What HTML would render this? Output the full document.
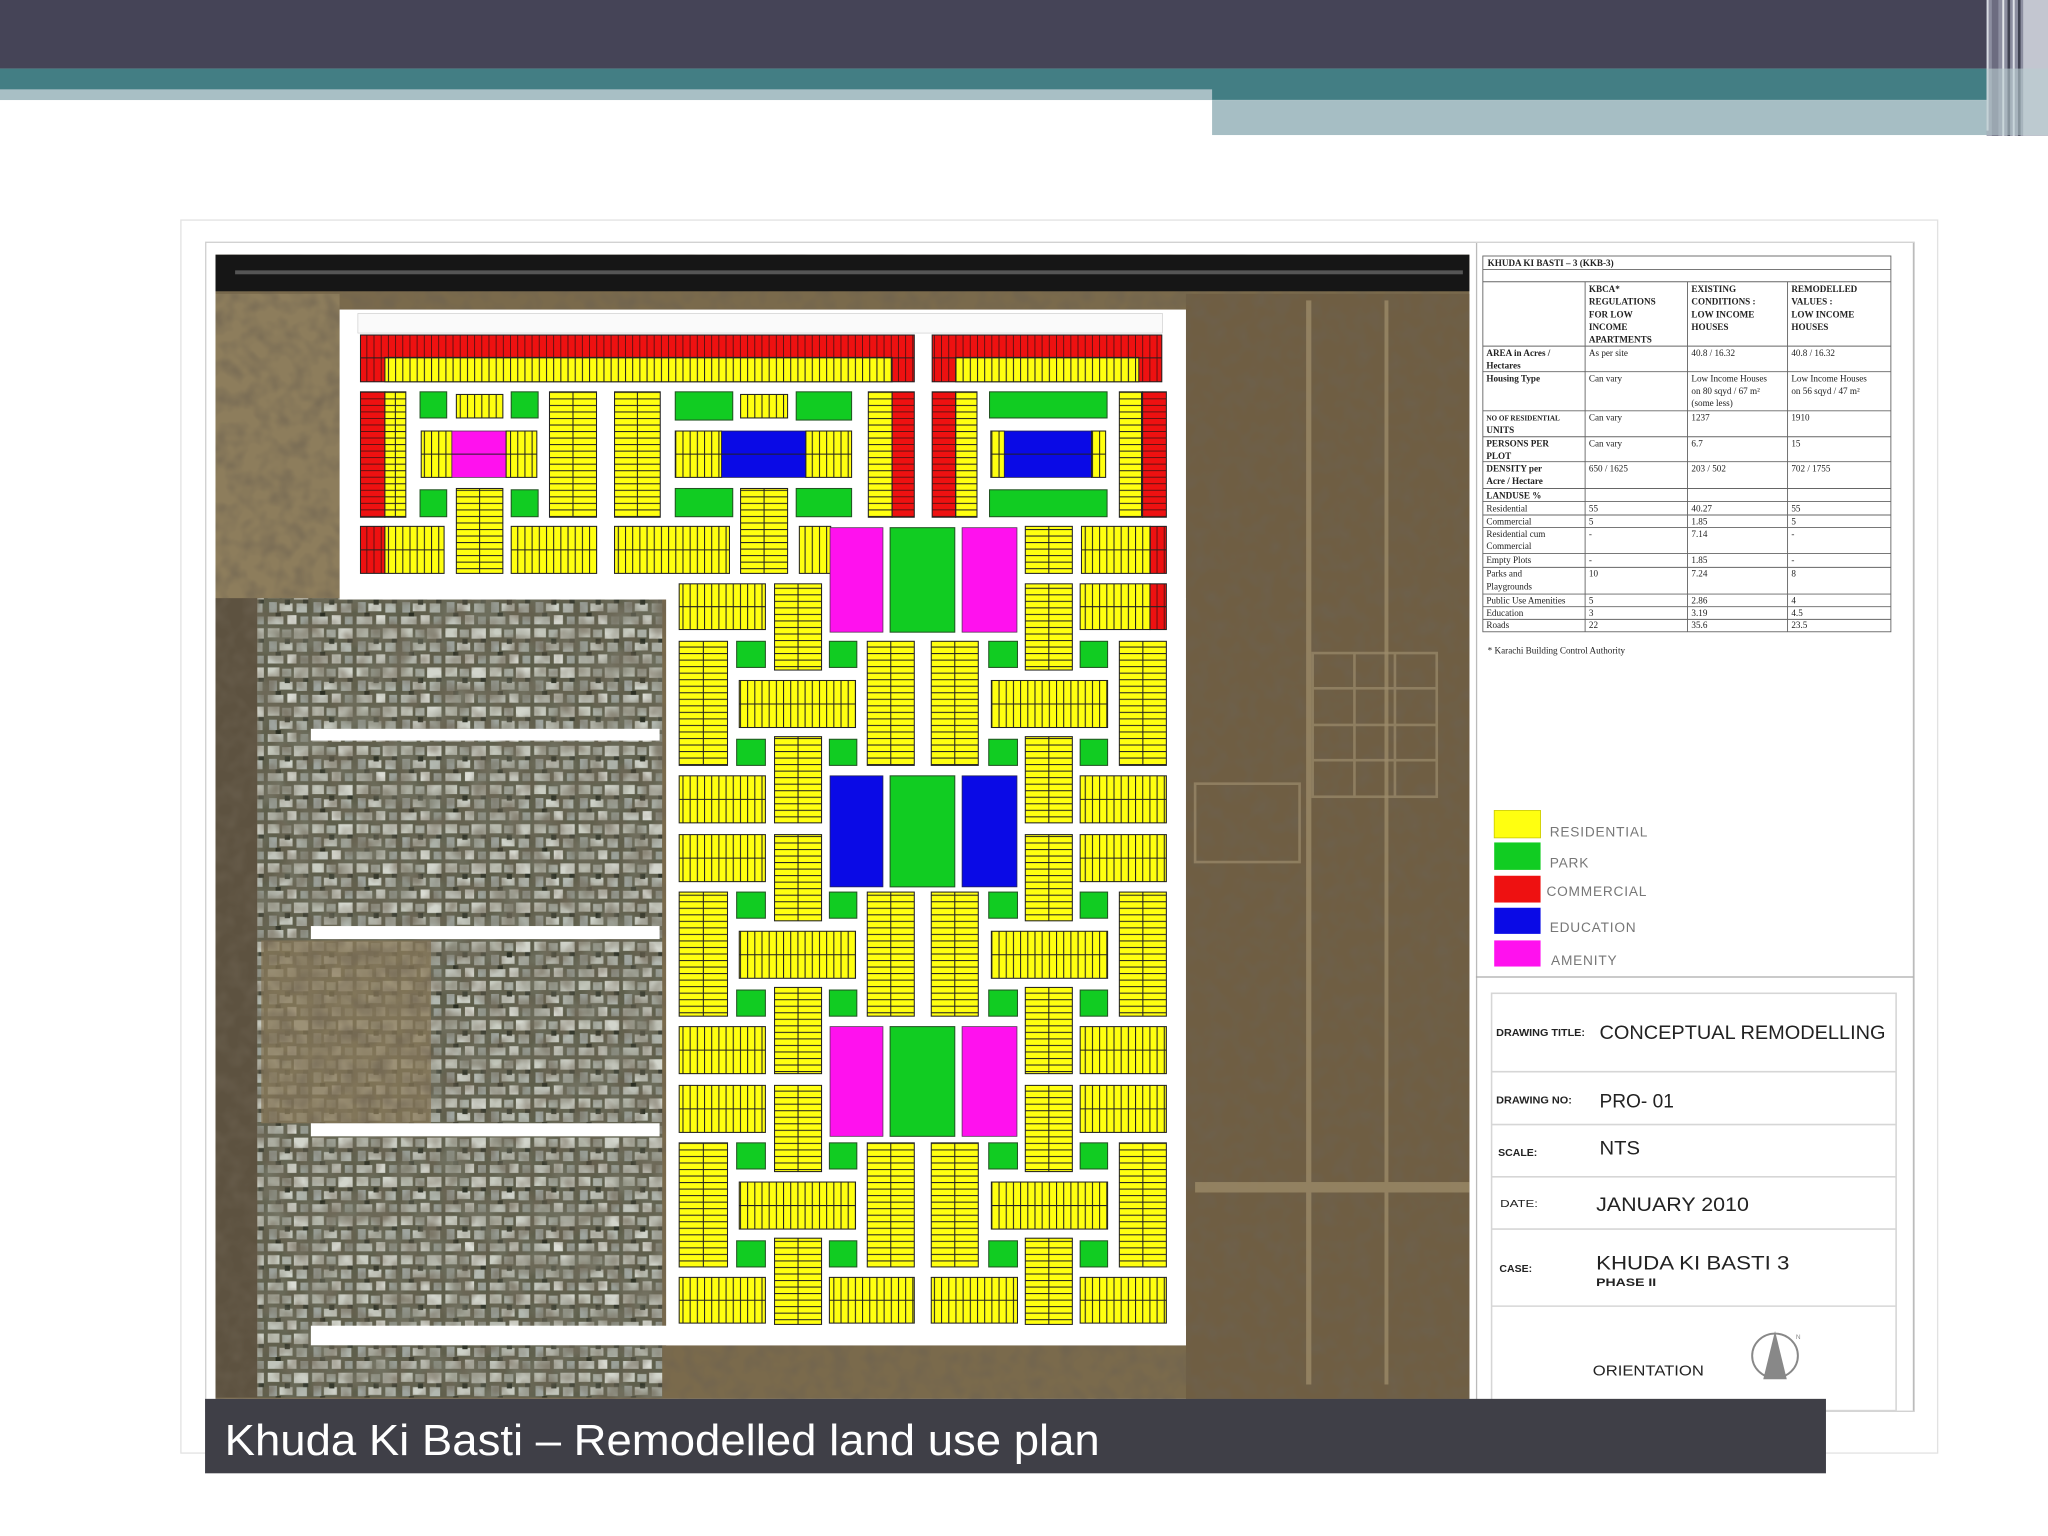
<!DOCTYPE html>
<html><head><meta charset="utf-8"><style>
html,body{margin:0;padding:0;background:#fff;width:2048px;height:1536px;overflow:hidden}
svg{display:block}
.t{font-family:"Liberation Serif",serif;font-size:7px;fill:#222}
.b{font-weight:bold}
.lg{font-family:"Liberation Sans",sans-serif;font-size:10.5px;fill:#777;letter-spacing:.6px}
.tb{font-family:"Liberation Sans",sans-serif;fill:#222}
.Y{fill:url(#pv);stroke:#222;stroke-width:.8}
.V{fill:url(#ph);stroke:#222;stroke-width:.8}
.R{fill:url(#pr);stroke:#222;stroke-width:.8}
.RV{fill:url(#prh);stroke:#222;stroke-width:.8}
.G{fill:#11cc22;stroke:#225522;stroke-width:.8}
.M{fill:#ff11ee;stroke:#553355;stroke-width:.6}
.B{fill:#0a0ae6;stroke:#222255;stroke-width:.6}
.ml{stroke:#222;stroke-width:.8;fill:none}
</style></head><body>
<svg width="2048" height="1536" viewBox="0 0 1568 1176" preserveAspectRatio="none" xmlns="http://www.w3.org/2000/svg">
<defs>
<pattern id="pv" patternUnits="userSpaceOnUse" width="5.5" height="50"><rect width="5.5" height="50" fill="#ffff10"/><rect width=".8" height="50" fill="#222"/></pattern>
<pattern id="ph" patternUnits="userSpaceOnUse" width="50" height="5"><rect width="50" height="5" fill="#ffff10"/><rect width="50" height=".8" fill="#222"/></pattern>
<pattern id="pr" patternUnits="userSpaceOnUse" width="5.5" height="50"><rect width="5.5" height="50" fill="#ee1111"/><rect width=".7" height="50" fill="#551111"/></pattern>
<pattern id="prh" patternUnits="userSpaceOnUse" width="50" height="5"><rect width="50" height="5" fill="#ee1111"/><rect width="50" height=".7" fill="#551111"/></pattern>
<pattern id="st" patternUnits="userSpaceOnUse" width="34" height="30">
<rect width="34" height="30" fill="#5e5f4c"/>
<rect x="1" y="1" width="9" height="7" fill="#c9cdc2"/><rect x="12" y="2" width="7" height="6" fill="#a9aea4"/>
<rect x="21" y="1" width="11" height="8" fill="#d2d5cc"/><rect x="2" y="11" width="6" height="8" fill="#9ea49e"/>
<rect x="10" y="12" width="10" height="6" fill="#cdd1c8"/><rect x="23" y="12" width="8" height="7" fill="#b2b8b0"/>
<rect x="1" y="22" width="12" height="6" fill="#c0c4bb"/><rect x="16" y="21" width="7" height="7" fill="#dadcd4"/>
<rect x="26" y="22" width="6" height="6" fill="#9aa098"/>
<rect x="14" y="9" width="4" height="4" fill="#2d3226"/><rect x="7" y="19" width="4" height="3" fill="#2a2e22"/>
<rect x="28" y="9" width="4" height="3" fill="#30352a"/>
</pattern>
<filter id="nz" x="0" y="0" width="100%" height="100%"><feTurbulence type="fractalNoise" baseFrequency="0.08" numOctaves="2" seed="3"/><feColorMatrix values="0 0 0 0 0.15  0 0 0 0 0.12  0 0 0 0 0.08  0 0 0 1.2 -0.45"/></filter>
<filter id="nz2" x="0" y="0" width="100%" height="100%"><feTurbulence type="fractalNoise" baseFrequency="0.05" numOctaves="2" seed="7"/><feColorMatrix values="0 0 0 0 0.2  0 0 0 0 0.2  0 0 0 0 0.15  0 0 0 1.6 -0.6"/></filter>
</defs>

<rect x="0" y="0" width="1568" height="52.5" fill="#454457"/>
<rect x="0" y="52.5" width="1521" height="24" fill="#437e84"/>
<rect x="0" y="68.4" width="928" height="8.2" fill="#a8bfc5"/>
<rect x="928" y="76.6" width="610" height="26.8" fill="#a6bec4"/>
<g>
<rect x="1521" y="0" width="47" height="104" fill="#8c8ea0"/>
<rect x="1521" y="0" width="1.5" height="100" fill="#d8dce2"/>
<rect x="1525" y="0" width="5" height="104" fill="#6c6c80"/>
<rect x="1533" y="0" width="1.5" height="104" fill="#e3e6ea"/>
<rect x="1537" y="0" width="2" height="104" fill="#3e4050"/>
<rect x="1541" y="0" width="1.5" height="104" fill="#dfe2e8"/>
<rect x="1545" y="0" width="2" height="104" fill="#3e4050"/>
<rect x="1549" y="0" width="19" height="104" fill="#c3c6d0"/>
<rect x="1521" y="52.5" width="47" height="51" fill="#b9cdd1" opacity=".6"/>
</g>

<rect x="138.5" y="168.5" width="1345" height="944" fill="#fff" stroke="#e2e2e2"/>
<rect x="157.5" y="185.5" width="1308" height="895" fill="#fff" stroke="#cfcfcf"/>

<rect x="165" y="195" width="960" height="876" fill="#7a6a4c"/>
<rect x="165" y="225" width="95" height="233" fill="#8d7d5c"/>
<rect x="908" y="225" width="217" height="846" fill="#6f5e43"/>
<rect x="165" y="458" width="32" height="612" fill="#5d5240"/>
<rect x="197" y="458" width="310" height="612" fill="url(#st)"/>
<rect x="197" y="458" width="310" height="612" filter="url(#nz2)"/>
<rect x="200" y="720" width="130" height="140" fill="#8a7a5a" opacity=".75"/>
<rect x="165" y="195" width="960" height="876" filter="url(#nz)"/>
<rect x="165" y="195" width="960" height="28" fill="#161616"/>
<rect x="180" y="207" width="940" height="3" fill="#707070" opacity=".7"/>
<g fill="#9b8a68" opacity=".8">
<rect x="1000" y="230" width="4" height="830"/><rect x="1060" y="230" width="3" height="830"/>
<rect x="915" y="905" width="210" height="8"/>
</g>
<g fill="none" stroke="#9c8c6c" stroke-width="2" opacity=".7">
<rect x="1005" y="500" width="95" height="110"/><path d="M1005 555h95M1037 500v110M1068 500v110M1005 527h95M1005 582h95"/>
<rect x="915" y="600" width="80" height="60"/>
</g>

<g fill="#fff">
<rect x="260" y="237" width="648" height="222"/>
<rect x="510" y="458" width="398" height="572"/>
<rect x="238" y="558" width="267" height="9"/>
<rect x="238" y="709" width="267" height="10"/>
<rect x="238" y="860" width="267" height="10"/>
<rect x="238" y="1015" width="670" height="15"/>
</g>
<rect x="274" y="240" width="616" height="15" fill="#fafafa" stroke="#ccc" stroke-width=".5"/>

<rect class="R" x="276" y="256.5" width="424" height="35.8"/>
<rect class="Y" x="294.7" y="273.6" width="388.3" height="18.7"/>
<rect class="R" x="713.7" y="256.5" width="175.8" height="35.8"/>
<rect class="Y" x="731.7" y="273.6" width="140.2" height="18.7"/>

<rect class="RV" x="276" y="300" width="18.7" height="96"/>
<rect class="V" x="294.7" y="300" width="16" height="96"/>
<rect class="G" x="321.6" y="300" width="20.4" height="20"/>
<rect class="Y" x="349.4" y="302" width="35.6" height="18"/>
<rect class="G" x="391.4" y="300" width="20.6" height="20"/>
<rect class="Y" x="322.5" y="330" width="23.5" height="35.5"/>
<rect class="M" x="346" y="330" width="41.5" height="35.5"/>
<rect class="Y" x="387.5" y="330" width="23.5" height="35.5"/>
<rect class="G" x="321.6" y="375" width="20.4" height="20.6"/>
<rect class="G" x="391.4" y="375" width="20.6" height="20.6"/>
<rect class="V" x="349.4" y="374" width="35.6" height="65"/>
<rect class="V" x="420.7" y="300" width="36" height="96"/>
<rect class="V" x="470.5" y="300" width="35" height="96"/>
<rect class="G" x="517" y="300" width="44" height="21.6"/>
<rect class="Y" x="567" y="302" width="36" height="18"/>
<rect class="G" x="609.6" y="300" width="42.4" height="21.6"/>
<rect class="Y" x="517" y="330" width="35.5" height="35.5"/>
<rect class="B" x="552.5" y="330" width="64.5" height="35.5"/>
<rect class="Y" x="617" y="330" width="35" height="35.5"/>
<rect class="G" x="517" y="374" width="44" height="21.6"/>
<rect class="G" x="609.6" y="374" width="42.4" height="21.6"/>
<rect class="V" x="567" y="374" width="36" height="65"/>
<rect class="V" x="664.8" y="300" width="18.2" height="96"/>
<rect class="RV" x="683" y="300" width="17" height="96"/>
<rect class="RV" x="713.7" y="300" width="18" height="96"/>
<rect class="V" x="731.7" y="300" width="16.3" height="96"/>
<rect class="G" x="757.6" y="300" width="90" height="20"/>
<rect class="Y" x="758.6" y="330" width="10.4" height="35.5"/>
<rect class="B" x="769" y="330" width="66.7" height="35.5"/>
<rect class="Y" x="835.7" y="330" width="10.8" height="35.5"/>
<rect class="G" x="757.6" y="375" width="90" height="20.6"/>
<rect class="V" x="857" y="300" width="17.8" height="96"/>
<rect class="RV" x="874.8" y="300" width="18.2" height="96"/>

<rect class="R" x="276" y="403" width="18.7" height="36"/>
<rect class="Y" x="294.7" y="403" width="45.3" height="36"/>
<rect class="Y" x="391.4" y="403" width="65.4" height="36"/>
<rect class="Y" x="470.5" y="403" width="88" height="36"/>
<rect class="Y" x="612" y="403" width="24" height="36"/>
<rect class="V" x="785" y="403" width="36" height="36"/>
<rect class="Y" x="828" y="403" width="52.7" height="36"/>
<rect class="R" x="880.7" y="403" width="12.3" height="36"/>
<path class="ml" d="M276 274H700M713.7 274H889.5M276 421H340M391.4 421h65.4M470.5 421h88M828 421h65M803 403v36M302.7 300v96M367.2 374v65M438.7 300v96M488 300v96M585 374v65M322.5 347.7h88.5M517 347.7h135M758.6 347.7h88M874 300v96M731.7 300v96M683 300v96"/>

<rect class="M" x="635.5" y="404" width="40.5" height="80"/>
<rect class="G" x="681.5" y="404" width="49.5" height="80"/>
<rect class="M" x="736.6" y="404" width="42" height="80"/>
<rect class="B" x="635.5" y="594" width="40.5" height="85"/>
<rect class="G" x="681.5" y="594" width="49.5" height="85"/>
<rect class="B" x="736.6" y="594" width="42" height="85"/>
<rect class="M" x="635.5" y="786" width="40.5" height="84"/>
<rect class="G" x="681.5" y="786" width="49.5" height="84"/>
<rect class="M" x="736.6" y="786" width="42" height="84"/>

<g class="V">
<rect x="593" y="447" width="36" height="66"/><rect x="785" y="447" width="36" height="66"/>
<rect x="593" y="564" width="36" height="66"/><rect x="785" y="564" width="36" height="66"/>
<rect x="593" y="639" width="36" height="66"/><rect x="785" y="639" width="36" height="66"/>
<rect x="593" y="756" width="36" height="66"/><rect x="785" y="756" width="36" height="66"/>
<rect x="593" y="831" width="36" height="66"/><rect x="785" y="831" width="36" height="66"/>
<rect x="593" y="948" width="36" height="66"/><rect x="785" y="948" width="36" height="66"/>
<rect x="520" y="491" width="37" height="95"/><rect x="664" y="491" width="36" height="95"/><rect x="713" y="491" width="36" height="95"/><rect x="857" y="491" width="36" height="95"/>
<rect x="520" y="683" width="37" height="95"/><rect x="664" y="683" width="36" height="95"/><rect x="713" y="683" width="36" height="95"/><rect x="857" y="683" width="36" height="95"/>
<rect x="520" y="875" width="37" height="95"/><rect x="664" y="875" width="36" height="95"/><rect x="713" y="875" width="36" height="95"/><rect x="857" y="875" width="36" height="95"/>
</g>
<path class="ml" d="M611 447v66M803 447v66M611 564v66M803 564v66M611 639v66M803 639v66M611 756v66M803 756v66M611 831v66M803 831v66M611 948v66M803 948v66M538.5 491v95M682 491v95M731 491v95M875 491v95M538.5 683v95M682 683v95M731 683v95M875 683v95M538.5 875v95M682 875v95M731 875v95M875 875v95"/>
<g class="Y">
<rect x="520" y="447" width="66" height="35"/><rect x="827" y="447" width="53.5" height="35"/>
<rect x="520" y="594" width="66" height="36"/><rect x="827" y="594" width="66" height="36"/>
<rect x="520" y="639" width="66" height="36"/><rect x="827" y="639" width="66" height="36"/>
<rect x="520" y="786" width="66" height="36"/><rect x="827" y="786" width="66" height="36"/>
<rect x="520" y="831" width="66" height="36"/><rect x="827" y="831" width="66" height="36"/>
<rect x="520" y="978" width="66" height="35"/><rect x="827" y="978" width="66" height="35"/>
<rect x="635" y="978" width="65" height="35"/><rect x="713" y="978" width="66" height="35"/>
<rect x="566" y="521" width="89" height="36"/><rect x="759" y="521" width="89" height="36"/>
<rect x="566" y="713" width="89" height="36"/><rect x="759" y="713" width="89" height="36"/>
<rect x="566" y="905" width="89" height="36"/><rect x="759" y="905" width="89" height="36"/>
</g>
<rect class="R" x="880.5" y="447" width="12.5" height="35"/>
<path class="ml" d="M520 464.5h66M827 464.5h66M520 612h66M827 612h66M520 657h66M827 657h66M520 804h66M827 804h66M520 849h66M827 849h66M520 995.5h66M827 995.5h66M635 995.5h65M713 995.5h66M566 539h89M759 539h89M566 731h89M759 731h89M566 923h89M759 923h89"/>
<g class="G">
<rect x="564" y="491" width="22" height="20"/><rect x="635" y="491" width="21" height="20"/><rect x="757" y="491" width="22" height="20"/><rect x="827" y="491" width="21" height="20"/>
<rect x="564" y="566" width="22" height="20"/><rect x="635" y="566" width="21" height="20"/><rect x="757" y="566" width="22" height="20"/><rect x="827" y="566" width="21" height="20"/>
<rect x="564" y="683" width="22" height="20"/><rect x="635" y="683" width="21" height="20"/><rect x="757" y="683" width="22" height="20"/><rect x="827" y="683" width="21" height="20"/>
<rect x="564" y="758" width="22" height="20"/><rect x="635" y="758" width="21" height="20"/><rect x="757" y="758" width="22" height="20"/><rect x="827" y="758" width="21" height="20"/>
<rect x="564" y="875" width="22" height="20"/><rect x="635" y="875" width="21" height="20"/><rect x="757" y="875" width="22" height="20"/><rect x="827" y="875" width="21" height="20"/>
<rect x="564" y="950" width="22" height="20"/><rect x="635" y="950" width="21" height="20"/><rect x="757" y="950" width="22" height="20"/><rect x="827" y="950" width="21" height="20"/>
</g>

<rect x="1130" y="186" width="335" height="885" fill="#fff"/>
<line x1="1130.5" y1="186" x2="1130.5" y2="1072" stroke="#bbb"/>
<line x1="1465" y1="186" x2="1465" y2="1080" stroke="#bbb"/>
<line x1="1130" y1="748" x2="1465" y2="748" stroke="#aaa"/>

<g stroke="#666" stroke-width=".7" fill="none">
<rect x="1135.3" y="196" width="312.4" height="287.7"/>
<path d="M1135.3 206.3h312.4M1135.3 215.7h312.4M1213.6 215.7V483.7M1292 215.7V483.7M1368.6 215.7V483.7M1135.3 265h312.4M1135.3 284.6h312.4M1135.3 314.5h312.4M1135.3 334.4h312.4M1135.3 353.5h312.4M1135.3 374h312.4M1135.3 384h312.4M1135.3 394.3h312.4M1135.3 403.8h312.4M1135.3 423.7h312.4M1135.3 434.4h312.4M1135.3 454.8h312.4M1135.3 464.5h312.4M1135.3 474.2h312.4"/>
</g>
<text class="t b" x="1139" y="203.5">KHUDA  KI  BASTI – 3 (KKB-3)</text>
<g class="t b">
<text x="1216.5" y="223.5">KBCA*</text><text x="1216.5" y="233.2">REGULATIONS</text><text x="1216.5" y="242.9">FOR LOW</text><text x="1216.5" y="252.6">INCOME</text><text x="1216.5" y="262.3">APARTMENTS</text>
<text x="1295" y="223.5">EXISTING</text><text x="1295" y="233.2">CONDITIONS :</text><text x="1295" y="242.9">LOW INCOME</text><text x="1295" y="252.6">HOUSES</text>
<text x="1371.5" y="223.5">REMODELLED</text><text x="1371.5" y="233.2">VALUES :</text><text x="1371.5" y="242.9">LOW INCOME</text><text x="1371.5" y="252.6">HOUSES</text>
<text x="1138" y="272.5">AREA in Acres /</text><text x="1138" y="282">Hectares</text>
<text x="1138" y="292">Housing Type</text>
<text x="1138" y="322" font-size="5.5">NO OF RESIDENTIAL</text><text x="1138" y="331.5">UNITS</text>
<text x="1138" y="342">PERSONS PER</text><text x="1138" y="351.5">PLOT</text>
<text x="1138" y="361">DENSITY per</text><text x="1138" y="370.5">Acre / Hectare</text>
<text x="1138" y="381.5">LANDUSE %</text>
</g>
<g class="t" font-size="6.3">
<text x="1216.5" y="272.5">As per site</text><text x="1295" y="272.5">40.8 / 16.32</text><text x="1371.5" y="272.5">40.8 / 16.32</text>
<text x="1216.5" y="292">Can vary</text><text x="1295" y="292">Low Income Houses</text><text x="1295" y="301.5">on 80 sqyd / 67 m²</text><text x="1295" y="311">(some less)</text><text x="1371.5" y="292">Low Income Houses</text><text x="1371.5" y="301.5">on 56 sqyd / 47 m²</text>
<text x="1216.5" y="322">Can vary</text><text x="1295" y="322">1237</text><text x="1371.5" y="322">1910</text>
<text x="1216.5" y="342">Can vary</text><text x="1295" y="342">6.7</text><text x="1371.5" y="342">15</text>
<text x="1216.5" y="361">650 / 1625</text><text x="1295" y="361">203 / 502</text><text x="1371.5" y="361">702 / 1755</text>
<text x="1138" y="391.5">Residential</text><text x="1216.5" y="391.5">55</text><text x="1295" y="391.5">40.27</text><text x="1371.5" y="391.5">55</text>
<text x="1138" y="401.5">Commercial</text><text x="1216.5" y="401.5">5</text><text x="1295" y="401.5">1.85</text><text x="1371.5" y="401.5">5</text>
<text x="1138" y="411">Residential cum</text><text x="1138" y="420.5">Commercial</text><text x="1216.5" y="411">-</text><text x="1295" y="411">7.14</text><text x="1371.5" y="411">-</text>
<text x="1138" y="431">Empty Plots</text><text x="1216.5" y="431">-</text><text x="1295" y="431">1.85</text><text x="1371.5" y="431">-</text>
<text x="1138" y="441.5">Parks and</text><text x="1138" y="451.5">Playgrounds</text><text x="1216.5" y="441.5">10</text><text x="1295" y="441.5">7.24</text><text x="1371.5" y="441.5">8</text>
<text x="1138" y="462">Public Use Amenities</text><text x="1216.5" y="462">5</text><text x="1295" y="462">2.86</text><text x="1371.5" y="462">4</text>
<text x="1138" y="471.5">Education</text><text x="1216.5" y="471.5">3</text><text x="1295" y="471.5">3.19</text><text x="1371.5" y="471.5">4.5</text>
<text x="1138" y="481">Roads</text><text x="1216.5" y="481">22</text><text x="1295" y="481">35.6</text><text x="1371.5" y="481">23.5</text>
<text x="1139" y="500.5">* Karachi Building Control Authority</text>
</g>

<rect x="1144" y="620.5" width="35.5" height="21" fill="#ffff10" stroke="#c8c800" stroke-width=".6"/>
<rect x="1144" y="645" width="35.5" height="21" fill="#11cc22"/>
<rect x="1144" y="670.5" width="35.5" height="20.5" fill="#ee1111"/>
<rect x="1144" y="695" width="35.5" height="20" fill="#0a0ae6"/>
<rect x="1144" y="720" width="35.5" height="20" fill="#ff11ee"/>
<text class="lg" x="1186.5" y="640.5">RESIDENTIAL</text>
<text class="lg" x="1186.5" y="664.3">PARK</text>
<text class="lg" x="1184" y="686">COMMERCIAL</text>
<text class="lg" x="1186.5" y="713.6">EDUCATION</text>
<text class="lg" x="1187.5" y="738.7">AMENITY</text>

<g stroke="#d6d6d6" stroke-width="1.2" fill="none">
<rect x="1142" y="760.5" width="309.7" height="319.5"/>
<path d="M1142 820.5h309.7M1142 861h309.7M1142 901h309.7M1142 941h309.7M1142 1000h309.7"/>
</g>
<g class="tb" font-size="8" font-weight="bold" fill="#333">
<text x="1145.5" y="793" textLength="68" lengthAdjust="spacingAndGlyphs">DRAWING TITLE:</text>
<text x="1145.5" y="845" textLength="58" lengthAdjust="spacingAndGlyphs">DRAWING NO:</text>
<text x="1147" y="885" textLength="30" lengthAdjust="spacingAndGlyphs">SCALE:</text>
<text x="1148.5" y="924" textLength="29" lengthAdjust="spacingAndGlyphs" font-weight="normal">DATE:</text>
<text x="1148" y="974" textLength="25" lengthAdjust="spacingAndGlyphs">CASE:</text>
</g>
<g class="tb" font-size="15">
<text x="1224.6" y="795.5" textLength="219" lengthAdjust="spacingAndGlyphs">CONCEPTUAL REMODELLING</text>
<text x="1224.6" y="848" textLength="57" lengthAdjust="spacingAndGlyphs">PRO- 01</text>
<text x="1224.6" y="884" textLength="31" lengthAdjust="spacingAndGlyphs">NTS</text>
<text x="1222" y="927" textLength="117" lengthAdjust="spacingAndGlyphs">JANUARY 2010</text>
<text x="1222" y="972" textLength="148" lengthAdjust="spacingAndGlyphs">KHUDA KI BASTI 3</text>
</g>
<text class="tb" x="1222" y="984.6" font-size="8.5" font-weight="bold" fill="#444" textLength="46" lengthAdjust="spacingAndGlyphs">PHASE II</text>
<text class="tb" x="1219.5" y="1053" font-size="11" fill="#333" textLength="85" lengthAdjust="spacingAndGlyphs">ORIENTATION</text>
<ellipse cx="1359" cy="1038" rx="17.5" ry="17" fill="none" stroke="#888" stroke-width="1.5"/>
<polygon points="1359,1019 1350,1056 1368,1056" fill="#888"/>
<text x="1375" y="1025" font-family="Liberation Sans,sans-serif" font-size="5" fill="#888">N</text>

<rect x="157" y="1071" width="1241" height="57" fill="#3f3f47"/>
<text x="172" y="1114" font-family="Liberation Sans,sans-serif" font-size="33" fill="#fff" textLength="670" lengthAdjust="spacingAndGlyphs">Khuda Ki Basti – Remodelled land use plan</text>
</svg>
</body></html>
